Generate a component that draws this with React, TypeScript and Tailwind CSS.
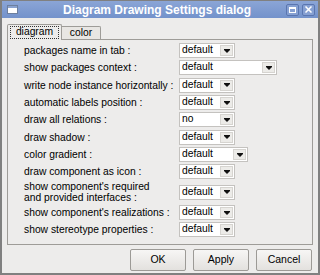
import React from "react";

const font = { fontFamily: '"Liberation Sans", Arial, sans-serif' };

function Arrow() {
  return (
    <svg width="6" height="4" viewBox="0 0 6 4">
      <rect x="0" y="0" width="6" height="1" fill="#111" />
      <polygon points="0,1 6,1 3,4" fill="#111" />
    </svg>
  );
}

function Combo({ value, w }: { value: string; w: string }) {
  return (
    <div className={`${w} h-[15px] flex border border-[#c4c2bf] bg-white`}>
      <div className="flex-1 flex items-center pl-[2px] text-[10.3px] leading-none text-black">{value}</div>
      <div className="w-[13px] my-[1px] mr-[1px] bg-[#ecebe8] border border-[#d6d4d0] flex items-center justify-center">
        <Arrow />
      </div>
    </div>
  );
}

type Row = { label: React.ReactNode; value: string; w: string; h: string };

const rows: Row[] = [
  { label: "packages name in tab :", value: "default", w: "w-[56px]", h: "h-[17px]" },
  { label: "show packages context :", value: "default", w: "w-[98px]", h: "h-[17px]" },
  { label: "write node instance horizontally :", value: "default", w: "w-[56px]", h: "h-[18px]" },
  { label: "automatic labels position :", value: "default", w: "w-[56px]", h: "h-[17px]" },
  { label: "draw all relations :", value: "no", w: "w-[56px]", h: "h-[17px]" },
  { label: "draw shadow :", value: "default", w: "w-[56px]", h: "h-[18px]" },
  { label: "color gradient :", value: "default", w: "w-[69px]", h: "h-[17px]" },
  { label: "draw component as icon :", value: "default", w: "w-[56px]", h: "h-[17px]" },
  {
    label: (
      <>
        show component's required
        <br />
        and provided interfaces :
      </>
    ),
    value: "default",
    w: "w-[56px]",
    h: "h-[24px]",
  },
  { label: "show component's realizations :", value: "default", w: "w-[56px]", h: "h-[17px]" },
  { label: "show stereotype properties :", value: "default", w: "w-[56px]", h: "h-[17px]" },
];

function Btn({ children }: { children: React.ReactNode }) {
  return (
    <div className="w-[56px] h-[22px] flex items-center justify-center rounded-[2px] border border-[#9c9a96] bg-gradient-to-b from-[#f7f6f5] to-[#e3e1de] text-[10.5px] text-black">
      {children}
    </div>
  );
}

export default function App() {
  return (
    <div style={font} className="w-[320px] h-[275px] flex flex-col bg-[#edeceb] border-2 border-t border-[#808080] overflow-hidden">
      {/* title bar */}
      <div className="h-[17px] flex items-center bg-gradient-to-b from-[#8ba5d6] to-[#7392cb] relative">
        <div className="ml-[5px] w-[11px] h-[9px] border border-[#6d7f9e] bg-white flex flex-col">
          <div className="h-[2px] bg-[#8aa2cf]" />
        </div>
        <div className="flex-1 text-center text-white font-bold text-[12px] leading-none pl-[10px]">
          Diagram Drawing Settings dialog
        </div>
        <div className="flex gap-[3px] mr-[3px]">
          <div className="w-[13px] h-[12px] rounded-[2px] border border-[#5a76b0] bg-[#86a0d2] flex items-center justify-center">
            <div className="w-[7px] h-[6px] border border-white border-t-2" />
          </div>
          <div className="w-[13px] h-[12px] rounded-[2px] border border-[#5a76b0] bg-[#86a0d2] flex items-center justify-center">
            <svg width="7" height="7" viewBox="0 0 7 7">
              <path d="M0.5 0.5 L6.5 6.5 M6.5 0.5 L0.5 6.5" stroke="white" strokeWidth="1.5" />
            </svg>
          </div>
        </div>
      </div>

      {/* body */}
      <div className="flex-1 flex flex-col px-[5px] pt-[5px]">
        {/* tabs */}
        <div className="flex items-end h-[16px]">
          <div className="w-[55px] h-[16px] px-[2px] pt-[1px] border border-b-0 border-[#9e9c98] bg-[#edeceb] relative z-10 -mb-[1px] rounded-t-[2px]">
            <div className="h-[13px] border border-dotted border-[#333] flex items-center justify-center text-[10.3px] leading-none text-black">
              diagram
            </div>
          </div>
          <div className="w-[39px] h-[13px] border border-b-0 border-l-0 border-[#9e9c98] bg-[#e8e6e3] flex items-center justify-center text-[10.3px] leading-none text-black rounded-tr-[2px]">
            color
          </div>
        </div>
        {/* panel */}
        <div className="w-[306px] h-[206px] border border-[#9e9c98] flex flex-col pt-[2px] pl-[16px]">
          {rows.map((r, i) => (
            <div key={i} className={`${r.h} flex items-center`}>
              <div className="w-[155px] text-[10.3px] leading-[11px] text-black">{r.label}</div>
              <Combo value={r.value} w={r.w} />
            </div>
          ))}
        </div>
        {/* buttons */}
        <div className="flex justify-end gap-[7px] pt-[4px] pr-[1px]">
          <Btn>OK</Btn>
          <Btn>Apply</Btn>
          <Btn>Cancel</Btn>
        </div>
      </div>
    </div>
  );
}
